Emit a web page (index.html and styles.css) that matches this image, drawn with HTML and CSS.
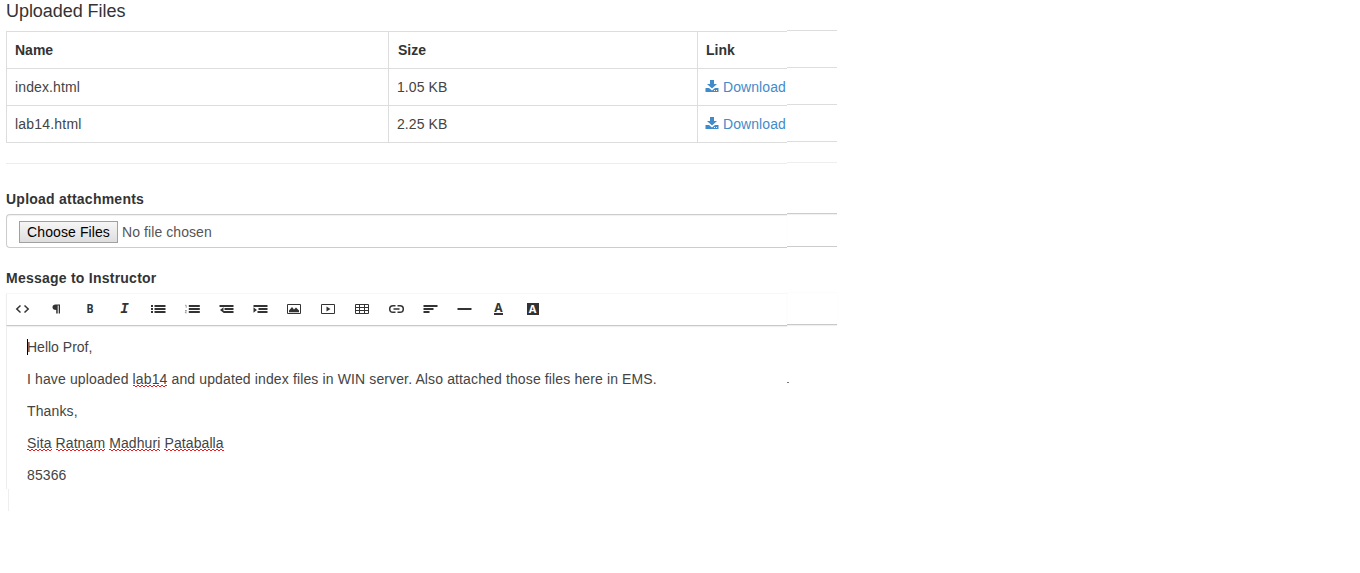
FILE: index.html
```html
<!DOCTYPE html>
<html lang="en">
<head>
<meta charset="utf-8">
<title>Uploaded Files</title>
<link rel="stylesheet" href="styles.css">
</head>
<body>
<div class="page">
  <main class="main">
    <h4 class="title">Uploaded Files</h4>
    <table class="files">
      <colgroup><col class="col-name"><col class="col-size"><col></colgroup>
      <thead><tr><th>Name</th><th class="size-head">Size</th><th>Link</th></tr></thead>
      <tbody>
        <tr><td><span class="fname">index.html</span></td><td>1.05 KB</td><td><a class="download"><svg width="14" height="13" viewBox="0 0 14 13"><path d="M5 0h4v4h3L7 8.500 2 4h3zM.5 8h3.500l3 2.500L10 8h3.500V12H.5z"/><path class="slot" d="M9 10h1v1H9zM11 10h1v1h-1z"/></svg><span>Download</span></a></td></tr>
        <tr><td><span class="fname2">lab14.html</span></td><td>2.25 KB</td><td><a class="download"><svg width="14" height="13" viewBox="0 0 14 13"><path d="M5 0h4v4h3L7 8.500 2 4h3zM.5 8h3.500l3 2.500L10 8h3.500V12H.5z"/><path class="slot" d="M9 10h1v1H9zM11 10h1v1h-1z"/></svg><span>Download</span></a></td></tr>
      </tbody>
    </table>
    <hr class="rule">
    <label class="label upload-label">Upload attachments</label>
    <div class="file-input"><button class="choose">Choose Files</button><span class="none">No file chosen</span></div>
    <label class="label message-label">Message to Instructor</label>
    <div class="toolbar">
      <span class="tool"><svg viewBox="0 0 16 12"><path class="s" d="M6.500 2.500 2.800 6l3.700 3.500M10.500 2.500 14.200 6l-3.700 3.500"/></svg></span>
      <span class="tool"><svg viewBox="0 0 16 12"><path d="M7.500 1.500H12v9h-1.300v-8h-1v8H8.200V7C5.500 7 4.500 5.800 4.500 4.200S5.700 1.500 7.500 1.500z"/></svg></span>
      <span class="tool"><b class="glyph narrow">B</b></span>
      <span class="tool"><i class="glyph italic">I</i></span>
      <span class="tool"><svg viewBox="0 0 16 12"><path d="M1 2h2v2H1zM1 5h2v2H1zM1 8h2v2H1zM4.500 2h11v2h-11zM4.500 5h11v2h-11zM4.500 8h11v2h-11z"/></svg></span>
      <span class="tool"><svg viewBox="0 0 16 12"><path d="M4.800 2h11v2h-11zM4.800 5h11v2h-11zM4.800 8h11v2h-11z"/><path class="thin" d="M1 2.300h1.200v2.500M1 7.500h1.500L1.200 9.800h1.500"/></svg></span>
      <span class="tool"><svg viewBox="0 0 16 12"><path d="M1.500 2h14v2h-14zM6.500 5h9v2h-9zM5.500 8h10v2h-10zM5.500 4.300v5.400L2 7z"/></svg></span>
      <span class="tool"><svg viewBox="0 0 16 12"><path d="M1.500 2h14v2h-14zM6.500 5h9v2h-9zM5.500 8h10v2h-10zM1.500 4.300v5.400L5 7z"/></svg></span>
      <span class="tool"><svg viewBox="0 0 16 12"><path class="s1" d="M1.500 1.500h13v9h-13z"/><path d="M3 9.300V7.500l3-3.500 2 2.500 2-2 3 3v1.800z"/></svg></span>
      <span class="tool"><svg viewBox="0 0 16 12"><path class="s1" d="M1.500 1.500h13v9h-13z"/><path d="M6.500 3.500v5L10.500 6z"/></svg></span>
      <span class="tool"><svg viewBox="0 0 16 12"><path class="s1" d="M1.500 1.500h13v9h-13zM1.500 4.500h13M1.500 7.500h13M5.500 1.500v9M10.500 1.500v9"/></svg></span>
      <span class="tool"><svg viewBox="0 0 16 12"><path class="s" d="M7.500 2.700H5a3.300 3.300 0 0 0 0 6.600h2.500M9.500 2.700H12a3.300 3.300 0 0 1 0 6.600H9.500M5.500 6h6"/></svg></span>
      <span class="tool"><svg viewBox="0 0 16 12"><path d="M1.500 2h14v2h-14zM1.500 5h10v2h-10zM1.500 8h6v2h-6z"/></svg></span>
      <span class="tool"><svg viewBox="0 0 16 12"><path d="M1.500 5h14v2h-14z"/></svg></span>
      <span class="tool"><b class="glyph lined">A</b></span>
      <span class="tool"><b class="glyph boxed">A</b></span>
    </div>
    <div class="editor">
      <p><span class="caret"></span><span>Hello Prof,</span></p>
      <p><span class="message-text">I have uploaded <u>lab14</u> and updated index files in WIN server. Also attached those files here in EMS.</span></p>
      <p><span class="thanks">Thanks,</span></p>
      <p><span class="signature"><u>Sita</u> <u>Ratnam</u> <u>Madhuri</u> <u>Pataballa</u></span></p>
      <p><span class="thanks">85366</span></p>
    </div>
    <div class="editor-tail"></div>
  </main>
  <aside class="strip">
    <div class="grid-row"></div><div class="grid-row"></div><div class="grid-row"></div>
    <div class="grid-end"></div>
    <div class="strip-rule"></div>
    <div class="strip-input"></div>
    <div class="strip-toolbar"></div>
    <div class="speck"></div>
  </aside>
</div>
</body>
</html>
```
FILE: styles.css
```css
* { box-sizing: border-box; }
body { margin: 0; background: #fff; color: #333; font: 14px/20px "Liberation Sans", Arial, sans-serif; }
.page { display: flex; align-items: flex-start; height: 573px; padding-left: 6px; overflow: hidden; }
.main { width: 781px; padding-top: 1px; }
.title { margin: 0 0 10px; font-size: 18px; line-height: 20px; font-weight: 400; letter-spacing: -.05px; }
.files { width: 781px; border-collapse: separate; border-spacing: 0; table-layout: fixed; border-top: 1px solid #ddd; border-left: 1px solid #ddd; }
.col-name { width: 382px; }
.col-size { width: 309px; }
.files th, .files td { height: 37px; padding: 8px; border-bottom: 1px solid #ddd; border-right: 1px solid #ddd; text-align: left; line-height: 20px; }
.files td { color: #444; letter-spacing: .08px; }
.files .size-head { padding-left: 9px; }
.files th:last-child, .files td:last-child { border-right: 0; padding-right: 0; }
.fname { letter-spacing: .12px; }
.fname2 { letter-spacing: .2px; }
.download { display: flex; align-items: center; gap: 4px; color: #428bca; white-space: nowrap; }
.download svg { fill: #428bca; flex: none; margin: -2px 0 0 -1px; }
.download .slot { fill: #fff; }
.rule { margin: 20px 0 25px; border: 0; border-top: 1px solid #eee; }
.label { display: block; font-weight: 700; height: 20px; }
.upload-label, .message-label { margin-bottom: 5px; letter-spacing: .24px; }
.file-input { display: flex; align-items: center; height: 34px; margin-bottom: 20px; padding: 1px 0 0 12px; border: 1px solid #ccc; border-right: 0; border-radius: 4px 0 0 4px; box-shadow: inset 0 1px 1px rgba(0,0,0,.06); color: #555; }
.choose { width: 99px; height: 22px; padding: 0; border: 1px solid #a0a0a0; border-radius: 0; background: linear-gradient(#f6f6f6, #dedede); font: inherit; line-height: 18px; letter-spacing: .1px; color: #000; white-space: nowrap; }
.none { margin-left: 4px; letter-spacing: .08px; }
.toolbar { display: flex; height: 33px; border-left: 1px solid #eee; border-top: 1px solid #f8f8f8; border-bottom: 1px solid #c8c8c8; box-shadow: 0 1px 1px rgba(0,0,0,.06); }
.tool { display: flex; align-items: center; justify-content: center; width: 34px; height: 30px; }
.tool:first-child { width: 32px; padding-right: 2px; }
.tool svg { width: 16px; height: 12px; fill: #333; }
.tool .s { fill: none; stroke: #333; stroke-width: 1.500; }
.tool .s1 { fill: none; stroke: #333; stroke-width: 1; }
.tool .thin { fill: none; stroke: #777; stroke-width: .7; }
.glyph { font: 700 12px/12px "Noto Sans", sans-serif; }
.narrow { transform: scaleX(.88); }
.italic { font: italic 700 14px/12px "Liberation Mono", monospace; padding-left: 1px; }
.lined { height: 12px; line-height: 10px; width: 9px; margin-left: 1px; text-align: center; border-bottom: 2px solid #333; }
.boxed { width: 12px; height: 12px; margin-left: 1px; background: #333; color: #fff; text-align: center; font-size: 11px; }
.editor { height: 163px; padding: 11px 0 0 20px; border-left: 1px solid #eee; color: #444; }
.editor p { display: flex; height: 20px; margin: 0 0 12px; white-space: nowrap; }
.caret { width: 1px; height: 16px; margin: 2px -1px 0 0; background: #000; }
.message-text { letter-spacing: .128px; }
.thanks { letter-spacing: .12px; }
.signature { letter-spacing: .1px; }
.editor u { text-decoration: none; padding-bottom: 0; background: linear-gradient(90deg, #e02020 2px, transparent 2px) 0 14px / 4px 1px repeat-x, linear-gradient(90deg, transparent 2px, #e02020 2px) 0 15px / 4px 1px repeat-x; }
.editor-tail { height: 22px; margin-left: 2px; border-left: 1px solid #eee; }
.strip { width: 50px; padding-top: 30px; }
.grid-row { height: 37px; border-top: 1px solid #ddd; }
.grid-end { height: 21px; border-top: 1px solid #ddd; }
.strip-rule { height: 51px; border-top: 1px solid #eee; }
.strip-input { height: 34px; border-top: 1px solid #ccc; border-bottom: 1px solid #ccc; box-shadow: inset 0 1px 1px rgba(0,0,0,.06); }
.strip-toolbar { height: 33px; margin-top: 45px; border-top: 1px solid #fcfcfc; border-bottom: 1px solid #c8c8c8; box-shadow: 0 1px 1px rgba(0,0,0,.06); }
.speck { width: 2px; height: 1px; margin-top: 57px; background: #777; }
```
